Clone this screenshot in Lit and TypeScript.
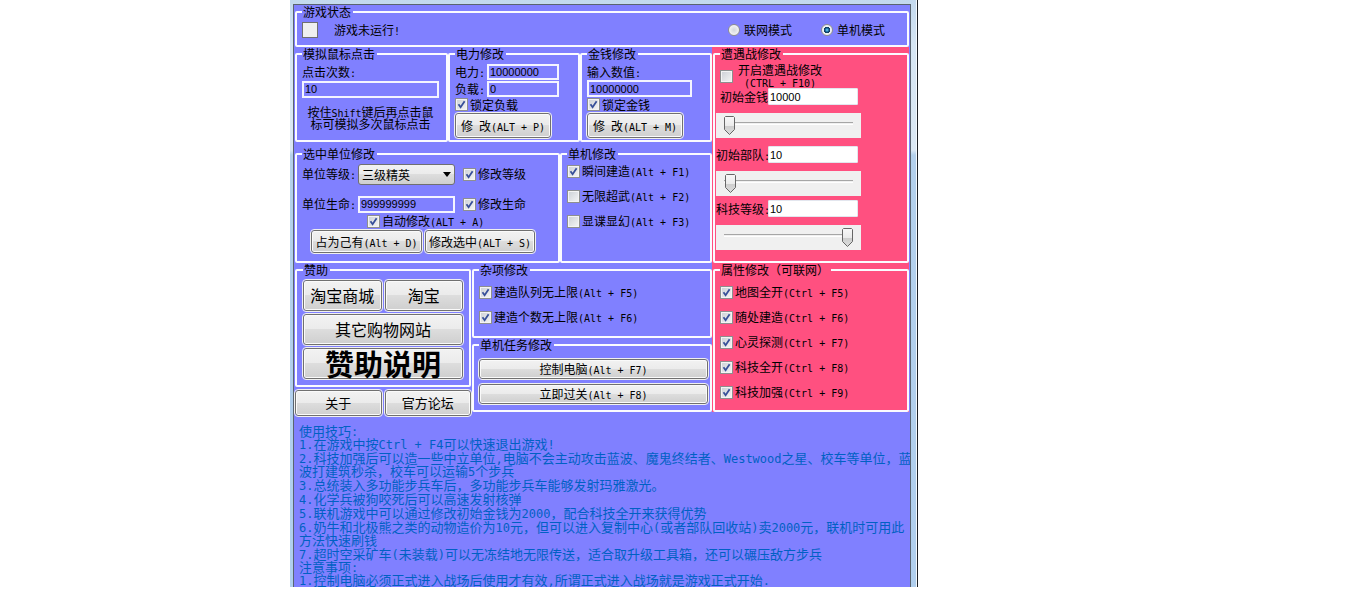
import { LitElement, html, css } from "lit";
import { customElement } from "lit/decorators.js";

// Half-width characters are set in a monospaced face, half the width of a CJK glyph.
const mixed = (text: string) =>
  text
    .split(/([\x20-\x7e]+)/)
    .map((part) => (/^[\x20-\x7e]/.test(part) ? html`<span class="latin">${part}</span>` : part));

const check = (text: string, checked = true) => html`
  <label class="check"><input type="checkbox" .checked=${checked} /><span>${mixed(text)}</span></label>
`;

const TIPS = [
  "1.在游戏中按Ctrl + F4可以快速退出游戏!",
  "2.科技加强后可以造一些中立单位,电脑不会主动攻击蓝波、魔鬼终结者、Westwood之星、校车等单位，蓝\n波打建筑秒杀，校车可以运输5个步兵",
  "3.总统装入多功能步兵车后，多功能步兵车能够发射玛雅激光。",
  "4.化学兵被狗咬死后可以高速发射核弹",
  "5.联机游戏中可以通过修改初始金钱为2000，配合科技全开来获得优势",
  "6.奶牛和北极熊之类的动物造价为10元，但可以进入复制中心(或者部队回收站)卖2000元，联机时可用此\n方法快速刷钱",
  "7.超时空采矿车(未装载)可以无冻结地无限传送，适合取升级工具箱，还可以碾压敌方步兵",
];
const NOTES = ["1.控制电脑必须正式进入战场后使用才有效,所谓正式进入战场就是游戏正式开始."];

@customElement("app-root")
export class AppRoot extends LitElement {
  static styles = css`
    :host {
      display: grid;
      grid-template-columns: 290px minmax(0, 628px);
      background: #fff;
      color: #000;
      font: 12px/16px "Noto Sans CJK SC", sans-serif;
    }
    * {
      box-sizing: border-box;
    }
    .window {
      grid-column: 2;
      padding: 4px 6px 0 3px;
      border-right: 1px solid #1c2026;
      background: linear-gradient(#c3d9ee, #d5e5f3 45px, #dbe8f4 150px, #b3d0ec 155px, #b0cfee);
      box-shadow: inset -1px 0 #f4f9fd;
    }
    .client {
      border: 1px solid #5a6470;
      border-bottom: 0;
      background: #8080ff;
      padding: 0 1px 1px;
      overflow: hidden;
    }
    .latin {
      font-family: "DejaVu Sans Mono", monospace;
      font-size: 10px;
      line-height: 0;
      white-space: pre;
    }
    fieldset {
      min-width: 0;
      margin: 0;
      padding: 0 5px;
      border: 2px solid #fbfbff;
      border-radius: 2px;
    }
    legend {
      padding: 0 2px 0 1px;
      line-height: 14px;
    }
    label {
      white-space: nowrap;
    }
    input,
    select,
    button {
      margin: 0;
      color: #000;
      font: inherit;
    }
    input[type="text"] {
      width: 100%;
      min-width: 0;
      height: 17px;
      padding: 0 1px;
      border: 2px solid #f4f4ff;
      background: #8080ff;
      font: 11px/13px "Liberation Sans", sans-serif;
    }
    .white input[type="text"] {
      border: 1px solid #e3e6ee;
      border-radius: 1px;
      background: #fff;
    }
    input[type="checkbox"] {
      appearance: none;
      flex: none;
      width: 13px;
      height: 13px;
      border: 1px solid #8e8f8f;
      box-shadow: inset 0 0 0 1px #f4f4f4;
      background: linear-gradient(135deg, #cbcfd5, #f6f6f6);
    }
    input[type="checkbox"]:checked {
      background: url("data:image/svg+xml,%3Csvg xmlns='http://www.w3.org/2000/svg' viewBox='0 0 11 11'%3E%3Cpath d='M2.5 5.2 4.6 8.2 8.6 2.2' fill='none' stroke='%23374f99' stroke-width='1.8'/%3E%3C/svg%3E"),
        linear-gradient(135deg, #cbcfd5, #f6f6f6);
    }
    input[type="radio"] {
      appearance: none;
      width: 12px;
      height: 12px;
      border: 1px solid #8e8f8f;
      border-radius: 50%;
      background: radial-gradient(#d4d8dc, #f4f4f4 70%);
    }
    input[type="radio"]:checked {
      background: radial-gradient(circle closest-side at 50% 50%, #5cc0ea 10%, #12598c 40%, #0c3558 58%, #eef2f5 68%);
    }
    button {
      height: 25px;
      padding: 0;
      border: 1px solid #707070;
      border-radius: 3px;
      outline: 1px solid #f0f0f0;
      outline-offset: 0;
      box-shadow: inset 0 0 0 1px #fafafa;
      background: linear-gradient(#f2f2f2, #ebebeb 49%, #dddddd 50%, #cfcfcf);
      white-space: nowrap;
    }
    .check {
      display: flex;
      align-items: center;
      gap: 2px;
    }
    .status {
      height: 42px;
      padding: 2px 22px 0 5px;
    }
    .status-row {
      display: flex;
      align-items: center;
      height: 18px;
    }
    .lamp {
      width: 16px;
      height: 16px;
      margin-right: 16px;
      border: 1px solid #707070;
      background: #f0f0f0;
    }
    .modes {
      display: flex;
      gap: 29px;
      margin-left: auto;
    }
    .modes label {
      display: flex;
      align-items: center;
      gap: 4px;
    }
    .main {
      display: grid;
      grid-template-columns: 417px minmax(0, 1fr);
      align-items: start;
    }
    .row {
      display: grid;
    }
    .quick {
      grid-template-columns: 153px 132px 132px;
    }
    .quick fieldset {
      height: 95px;
      padding-top: 3px;
    }
    .quick .clicks {
      padding-right: 7px;
    }
    .clicks label,
    .money .caption {
      display: block;
    }
    .clicks p {
      margin: 8px 0 0;
      line-height: 12px;
      text-align: center;
    }
    .pair {
      display: grid;
      grid-template-columns: 32px 72px;
      grid-template-rows: 17px 16px;
      line-height: 16px;
    }
    .pair input[type="text"] {
      height: 16px;
    }
    .quick .check {
      height: 15px;
    }
    .quick button {
      display: block;
      width: 96px;
      margin-top: 1px;
    }
    .money input[type="text"] {
      display: block;
      width: 105px;
    }
    .units {
      grid-template-columns: 265px 152px;
      margin-top: 5px;
    }
    .units fieldset {
      height: 116px;
    }
    .units .selected {
      padding-top: 2px;
    }
    .unit-grid {
      display: grid;
      grid-template-columns: 56px 97px auto;
      grid-template-rows: 22px 18px;
      row-gap: 10px;
      align-items: center;
    }
    .unit-grid .check {
      margin-left: 8px;
    }
    select {
      appearance: none;
      width: 97px;
      height: 21px;
      padding: 0 3px;
      border: 1px solid #707070;
      border-radius: 3px;
      background:
        url("data:image/svg+xml,%3Csvg xmlns='http://www.w3.org/2000/svg' viewBox='0 0 8 5'%3E%3Cpath d='M0 0h8L4 5z'/%3E%3C/svg%3E") right 3px center / 8px 5px no-repeat,
        linear-gradient(#f2f2f2, #ebebeb 49%, #dddddd 50%, #cfcfcf);
      line-height: 19px;
    }
    .auto {
      display: flex;
      height: 16px;
      margin: 0 0 1px 65px;
    }
    .actions {
      display: grid;
      grid-template-columns: 111px 110px;
      gap: 3px;
      margin-left: 9px;
    }
    .actions button {
      height: 23px;
    }
    .list {
      display: grid;
      grid-auto-rows: 20px;
      gap: 5px;
    }
    .bottom {
      grid-template-columns: 176px minmax(0, 1fr);
      column-gap: 1px;
      align-items: start;
    }
    .sponsor {
      height: 124px;
      padding: 3px 6px 0;
    }
    .shops {
      display: grid;
      grid-template-columns: 1fr 1fr;
      gap: 3px;
    }
    .shops button {
      height: 31px;
      font-size: 16px;
      line-height: 29px;
    }
    .shops .wide {
      grid-column: 1 / -1;
    }
    .shops .big {
      font-size: 29px;
      font-weight: 700;
    }
    .links {
      display: grid;
      grid-template-columns: 1fr 1fr;
      gap: 3px;
      margin-top: 3px;
    }
    .links button {
      height: 26px;
      font-size: 13px;
    }
    .misc {
      height: 75px;
      padding-top: 5px;
    }
    .tasks {
      height: 74px;
      padding: 7px 2px 0 5px;
    }
    .task-buttons {
      display: grid;
      gap: 5px;
    }
    .tasks button {
      height: 20px;
    }
    .pink {
      background: #ff5080;
      padding-left: 1px;
    }
    .battle {
      height: 216px;
      padding: 0 1px;
    }
    .battle legend {
      margin-left: 4px;
    }
    .enable {
      display: flex;
      align-items: center;
      gap: 5px;
      height: 27px;
      padding: 3px 0 0 4px;
      line-height: 12px;
    }
    .enable small {
      display: block;
      font-size: inherit;
      text-align: center;
    }
    .white {
      display: grid;
      grid-template-columns: 52px 90px;
      line-height: 17px;
    }
    .first label {
      text-align: right;
    }
    input[type="range"] {
      appearance: none;
      display: block;
      width: 145px;
      height: 25px;
      margin: 8px 0;
      padding: 0 8px;
      background: linear-gradient(#a6a6a6, #a6a6a6) 8px 9px / 129px 1px no-repeat, linear-gradient(#fff, #fff) 8px 11px / 129px 1px no-repeat, #f0f0f0;
    }
    input[type="range"].mid {
      margin-bottom: 4px;
    }
    input[type="range"]::-webkit-slider-thumb {
      appearance: none;
      width: 11px;
      height: 19px;
      margin-top: -1px;
      background: url("data:image/svg+xml,%3Csvg xmlns='http://www.w3.org/2000/svg' viewBox='0 0 11 19'%3E%3ClinearGradient id='g' x2='0' y2='1'%3E%3Cstop stop-color='%23f8f8f8'/%3E%3Cstop offset='.5' stop-color='%23ebebeb'/%3E%3Cstop offset='.5' stop-color='%23ccc'/%3E%3Cstop offset='1' stop-color='%23ddd'/%3E%3C/linearGradient%3E%3Cpath d='M1.5.5h8l1 1v12l-5 5-5-5v-12z' fill='url(%23g)' stroke='%23666'/%3E%3C/svg%3E");
    }
    .attributes {
      height: 149px;
      padding-top: 5px;
    }
    .tips {
      padding: 8px 0 0 4px;
      color: #0060c4;
      font-size: 13px;
      line-height: 13px;
      white-space: pre;
    }
    .tips .latin {
      font-size: 12px;
    }
    .tips h2,
    .tips ul {
      margin: 0;
      padding: 0;
      font: inherit;
      list-style: none;
    }
    .tips ul {
      display: grid;
      gap: 1px;
    }
  `;

  render() {
    return html`
      <main class="window">
        <div class="client">
          <fieldset class="status">
            <legend>游戏状态</legend>
            <div class="status-row">
              <span class="lamp"></span>
              <span>${mixed("游戏未运行!")}</span>
              <div class="modes">
                <label><input type="radio" name="mode" />联网模式</label>
                <label><input type="radio" name="mode" checked />单机模式</label>
              </div>
            </div>
          </fieldset>
          <div class="main">
            <div>
              <div class="row quick">
                <fieldset class="clicks">
                  <legend>模拟鼠标点击</legend>
                  <label for="clicks">${mixed("点击次数:")}</label>
                  <input id="clicks" type="text" value="10" />
                  <p>${mixed("按住Shift键后再点击鼠")}<br />标可模拟多次鼠标点击</p>
                </fieldset>
                <fieldset>
                  <legend>电力修改</legend>
                  <div class="pair">
                    <label for="power">${mixed("电力:")}</label><input id="power" type="text" value="10000000" />
                    <label for="load">${mixed("负载:")}</label><input id="load" type="text" value="0" />
                  </div>
                  ${check("锁定负载")}
                  <button>${mixed("修 改(ALT + P)")}</button>
                </fieldset>
                <fieldset class="money">
                  <legend>金钱修改</legend>
                  <label class="caption" for="money">${mixed("输入数值:")}</label>
                  <input id="money" type="text" value="10000000" />
                  ${check("锁定金钱")}
                  <button>${mixed("修 改(ALT + M)")}</button>
                </fieldset>
              </div>
              <div class="row units">
                <fieldset class="selected">
                  <legend>选中单位修改</legend>
                  <div class="unit-grid">
                    <label for="rank">${mixed("单位等级:")}</label>
                    <select id="rank"><option>三级精英</option></select>
                    ${check("修改等级")}
                    <label for="life">${mixed("单位生命:")}</label>
                    <input id="life" type="text" value="999999999" />
                    ${check("修改生命")}
                  </div>
                  <div class="auto">${check("自动修改(ALT + A)")}</div>
                  <div class="actions">
                    <button>${mixed("占为己有(Alt + D)")}</button>
                    <button>${mixed("修改选中(ALT + S)")}</button>
                  </div>
                </fieldset>
                <fieldset>
                  <legend>单机修改</legend>
                  <div class="list">
                    ${check("瞬间建造(Alt + F1)")} ${check("无限超武(Alt + F2)", false)}
                    ${check("显谍显幻(Alt + F3)", false)}
                  </div>
                </fieldset>
              </div>
              <div class="row bottom">
                <div>
                  <fieldset class="sponsor">
                    <legend>赞助</legend>
                    <div class="shops">
                      <button>淘宝商城</button>
                      <button>淘宝</button>
                      <button class="wide">其它购物网站</button>
                      <button class="wide big">赞助说明</button>
                    </div>
                  </fieldset>
                  <div class="links">
                    <button>关于</button>
                    <button>官方论坛</button>
                  </div>
                </div>
                <div>
                  <fieldset class="misc">
                    <legend>杂项修改</legend>
                    <div class="list">${check("建造队列无上限(Alt + F5)")} ${check("建造个数无上限(Alt + F6)")}</div>
                  </fieldset>
                  <fieldset class="tasks">
                    <legend>单机任务修改</legend>
                    <div class="task-buttons">
                      <button>${mixed("控制电脑(Alt + F7)")}</button>
                      <button>${mixed("立即过关(Alt + F8)")}</button>
                    </div>
                  </fieldset>
                </div>
              </div>
            </div>
            <div class="pink">
              <fieldset class="battle">
                <legend>遭遇战修改</legend>
                <label class="enable">
                  <input type="checkbox" />
                  <span>开启遭遇战修改<small>${mixed("(CTRL + F10)")}</small></span>
                </label>
                <div class="white first">
                  <label for="cash">初始金钱</label><input id="cash" type="text" value="10000" />
                </div>
                <input type="range" min="0" max="100" value="0" aria-label="初始金钱" />
                <div class="white">
                  <label for="army">${mixed("初始部队:")}</label><input id="army" type="text" value="10" />
                </div>
                <input class="mid" type="range" min="0" max="100" value="1" aria-label="初始部队" />
                <div class="white">
                  <label for="tech">${mixed("科技等级:")}</label><input id="tech" type="text" value="10" />
                </div>
                <input type="range" min="0" max="10" value="10" aria-label="科技等级" />
              </fieldset>
              <fieldset class="attributes">
                <legend>属性修改（可联网）</legend>
                <div class="list">
                  ${check("地图全开(Ctrl + F5)")} ${check("随处建造(Ctrl + F6)")} ${check("心灵探测(Ctrl + F7)")}
                  ${check("科技全开(Ctrl + F8)")} ${check("科技加强(Ctrl + F9)")}
                </div>
              </fieldset>
            </div>
          </div>
          <section class="tips"><h2>${mixed("使用技巧:")}</h2><ul>${TIPS.map((t) => html`<li>${mixed(t)}</li>`)}</ul><h2>${mixed("注意事项:")}</h2><ul>${NOTES.map((t) => html`<li>${mixed(t)}</li>`)}</ul></section>
        </div>
      </main>
    `;
  }
}
